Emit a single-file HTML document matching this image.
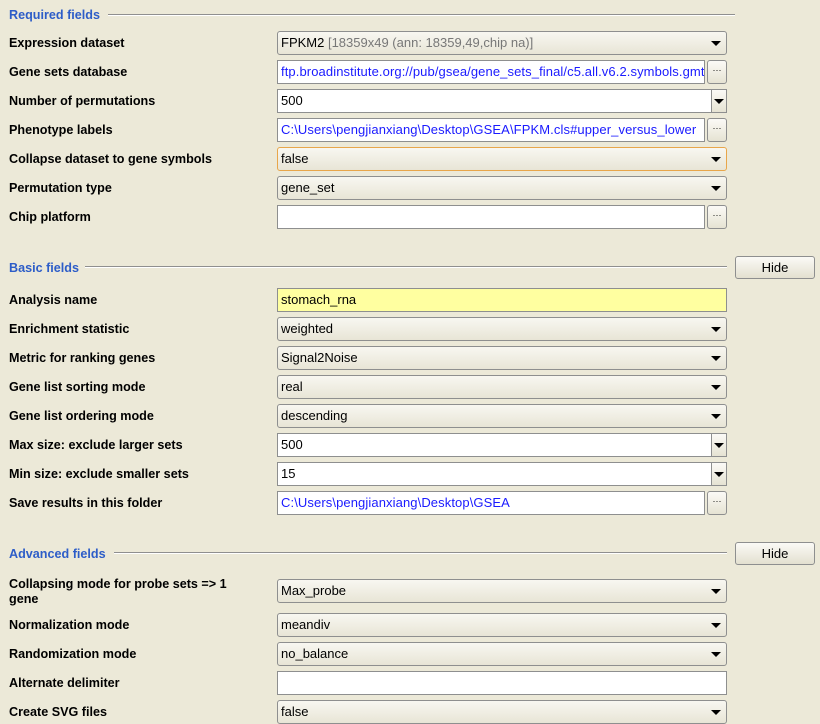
<!DOCTYPE html>
<html><head><meta charset="utf-8"><style>
body{margin:0;width:820px;height:709px;overflow:hidden;background:#ece9d8;font-family:"Liberation Sans",sans-serif;position:relative}
.h{position:absolute;left:9px;font-size:12.6px;font-weight:bold;color:#2d5dc8}
.ln{position:absolute;height:1px;background:#8f8f8f;border-bottom:1px solid #fff}
.l{position:absolute;left:9px;font-size:12.6px;font-weight:bold;color:#000;line-height:15px}
.c{position:absolute;left:277px;width:448px;height:22px;border:1px solid #8e8f8f;border-radius:3px;background:linear-gradient(#f8f7f1,#e8e5d6);font-size:13px;line-height:22px;box-sizing:content-box;white-space:nowrap}
.c span{padding-left:3px}
.c:after{content:"";position:absolute;right:5px;top:9px;border-left:5px solid transparent;border-right:5px solid transparent;border-top:5px solid #000}
.t{position:absolute;left:277px;width:426px;height:22px;border:1px solid #8e8f8f;background:#fff;font-size:13px;line-height:22px;color:#1a1aff;overflow:hidden;white-space:nowrap;letter-spacing:0.1px}
.t span{padding-left:3px}
.b{position:absolute;left:707px;width:18px;height:22px;border:1px solid #8e8f8f;border-radius:3px;background:linear-gradient(#fbfaf6,#e6e3d3);font-size:9px;text-align:center;line-height:18px}
.e{position:absolute;left:277px;width:448px;height:22px;border:1px solid #8e8f8f;background:#fff;font-size:13px;line-height:22px}
.e span{padding-left:3px}
.e i{position:absolute;right:0;top:0;width:14px;height:22px;border-left:1px solid #8e8f8f;background:linear-gradient(#fbfaf6,#e6e3d3)}
.e i:after{content:"";position:absolute;left:2px;top:9px;border-left:5px solid transparent;border-right:5px solid transparent;border-top:5px solid #000}
.hide{position:absolute;left:735px;width:78px;height:21px;border:1px solid #8e8f8f;border-radius:3px;background:linear-gradient(#fbfaf6,#e3e0d0);font-size:13px;text-align:center;line-height:21px}
</style></head><body>
<div class="h" style="top:8px">Required fields</div><div class="ln" style="left:108px;width:627px;top:14px"></div>
<div class="l" style="top:36px">Expression dataset</div>
<div class="c" style="top:31px"><span>FPKM2 <span style="color:#777;padding:0">[18359x49 (ann: 18359,49,chip na)]</span></span></div>
<div class="l" style="top:65px">Gene sets database</div>
<div class="t" style="top:60px"><span>ftp.broadinstitute.org://pub/gsea/gene_sets_final/c5.all.v6.2.symbols.gmt</span></div><div class="b" style="top:60px">···</div>
<div class="l" style="top:94px">Number of permutations</div>
<div class="e" style="top:89px"><span>500</span><i></i></div>
<div class="l" style="top:123px">Phenotype labels</div>
<div class="t" style="top:118px"><span>C:\Users\pengjianxiang\Desktop\GSEA\FPKM.cls#upper_versus_lower</span></div><div class="b" style="top:118px">···</div>
<div class="l" style="top:152px">Collapse dataset to gene symbols</div>
<div class="c" style="top:147px;border-color:#e8a64a"><span>false</span></div>
<div class="l" style="top:181px">Permutation type</div>
<div class="c" style="top:176px"><span>gene_set</span></div>
<div class="l" style="top:210px">Chip platform</div>
<div class="t" style="top:205px"></div><div class="b" style="top:205px">···</div>

<div class="h" style="top:261px">Basic fields</div><div class="ln" style="left:85px;width:642px;top:266px"></div>
<div class="hide" style="top:256px">Hide</div>
<div class="l" style="top:293px">Analysis name</div>
<div class="e" style="top:288px;background:#ffffa0"><span>stomach_rna</span></div>
<div class="l" style="top:322px">Enrichment statistic</div>
<div class="c" style="top:317px"><span>weighted</span></div>
<div class="l" style="top:351px">Metric for ranking genes</div>
<div class="c" style="top:346px"><span>Signal2Noise</span></div>
<div class="l" style="top:380px">Gene list sorting mode</div>
<div class="c" style="top:375px"><span>real</span></div>
<div class="l" style="top:409px">Gene list ordering mode</div>
<div class="c" style="top:404px"><span>descending</span></div>
<div class="l" style="top:438px">Max size: exclude larger sets</div>
<div class="e" style="top:433px"><span>500</span><i></i></div>
<div class="l" style="top:467px">Min size: exclude smaller sets</div>
<div class="e" style="top:462px"><span>15</span><i></i></div>
<div class="l" style="top:496px">Save results in this folder</div>
<div class="t" style="top:491px"><span>C:\Users\pengjianxiang\Desktop\GSEA</span></div><div class="b" style="top:491px">···</div>

<div class="h" style="top:547px">Advanced fields</div><div class="ln" style="left:114px;width:613px;top:552px"></div>
<div class="hide" style="top:542px">Hide</div>
<div class="l" style="top:577px">Collapsing mode for probe sets =&gt; 1<br>gene</div>
<div class="c" style="top:579px"><span>Max_probe</span></div>
<div class="l" style="top:618px">Normalization mode</div>
<div class="c" style="top:613px"><span>meandiv</span></div>
<div class="l" style="top:647px">Randomization mode</div>
<div class="c" style="top:642px"><span>no_balance</span></div>
<div class="l" style="top:676px">Alternate delimiter</div>
<div class="e" style="top:671px"></div>
<div class="l" style="top:705px">Create SVG files</div>
<div class="c" style="top:700px"><span>false</span></div>
</body></html>
